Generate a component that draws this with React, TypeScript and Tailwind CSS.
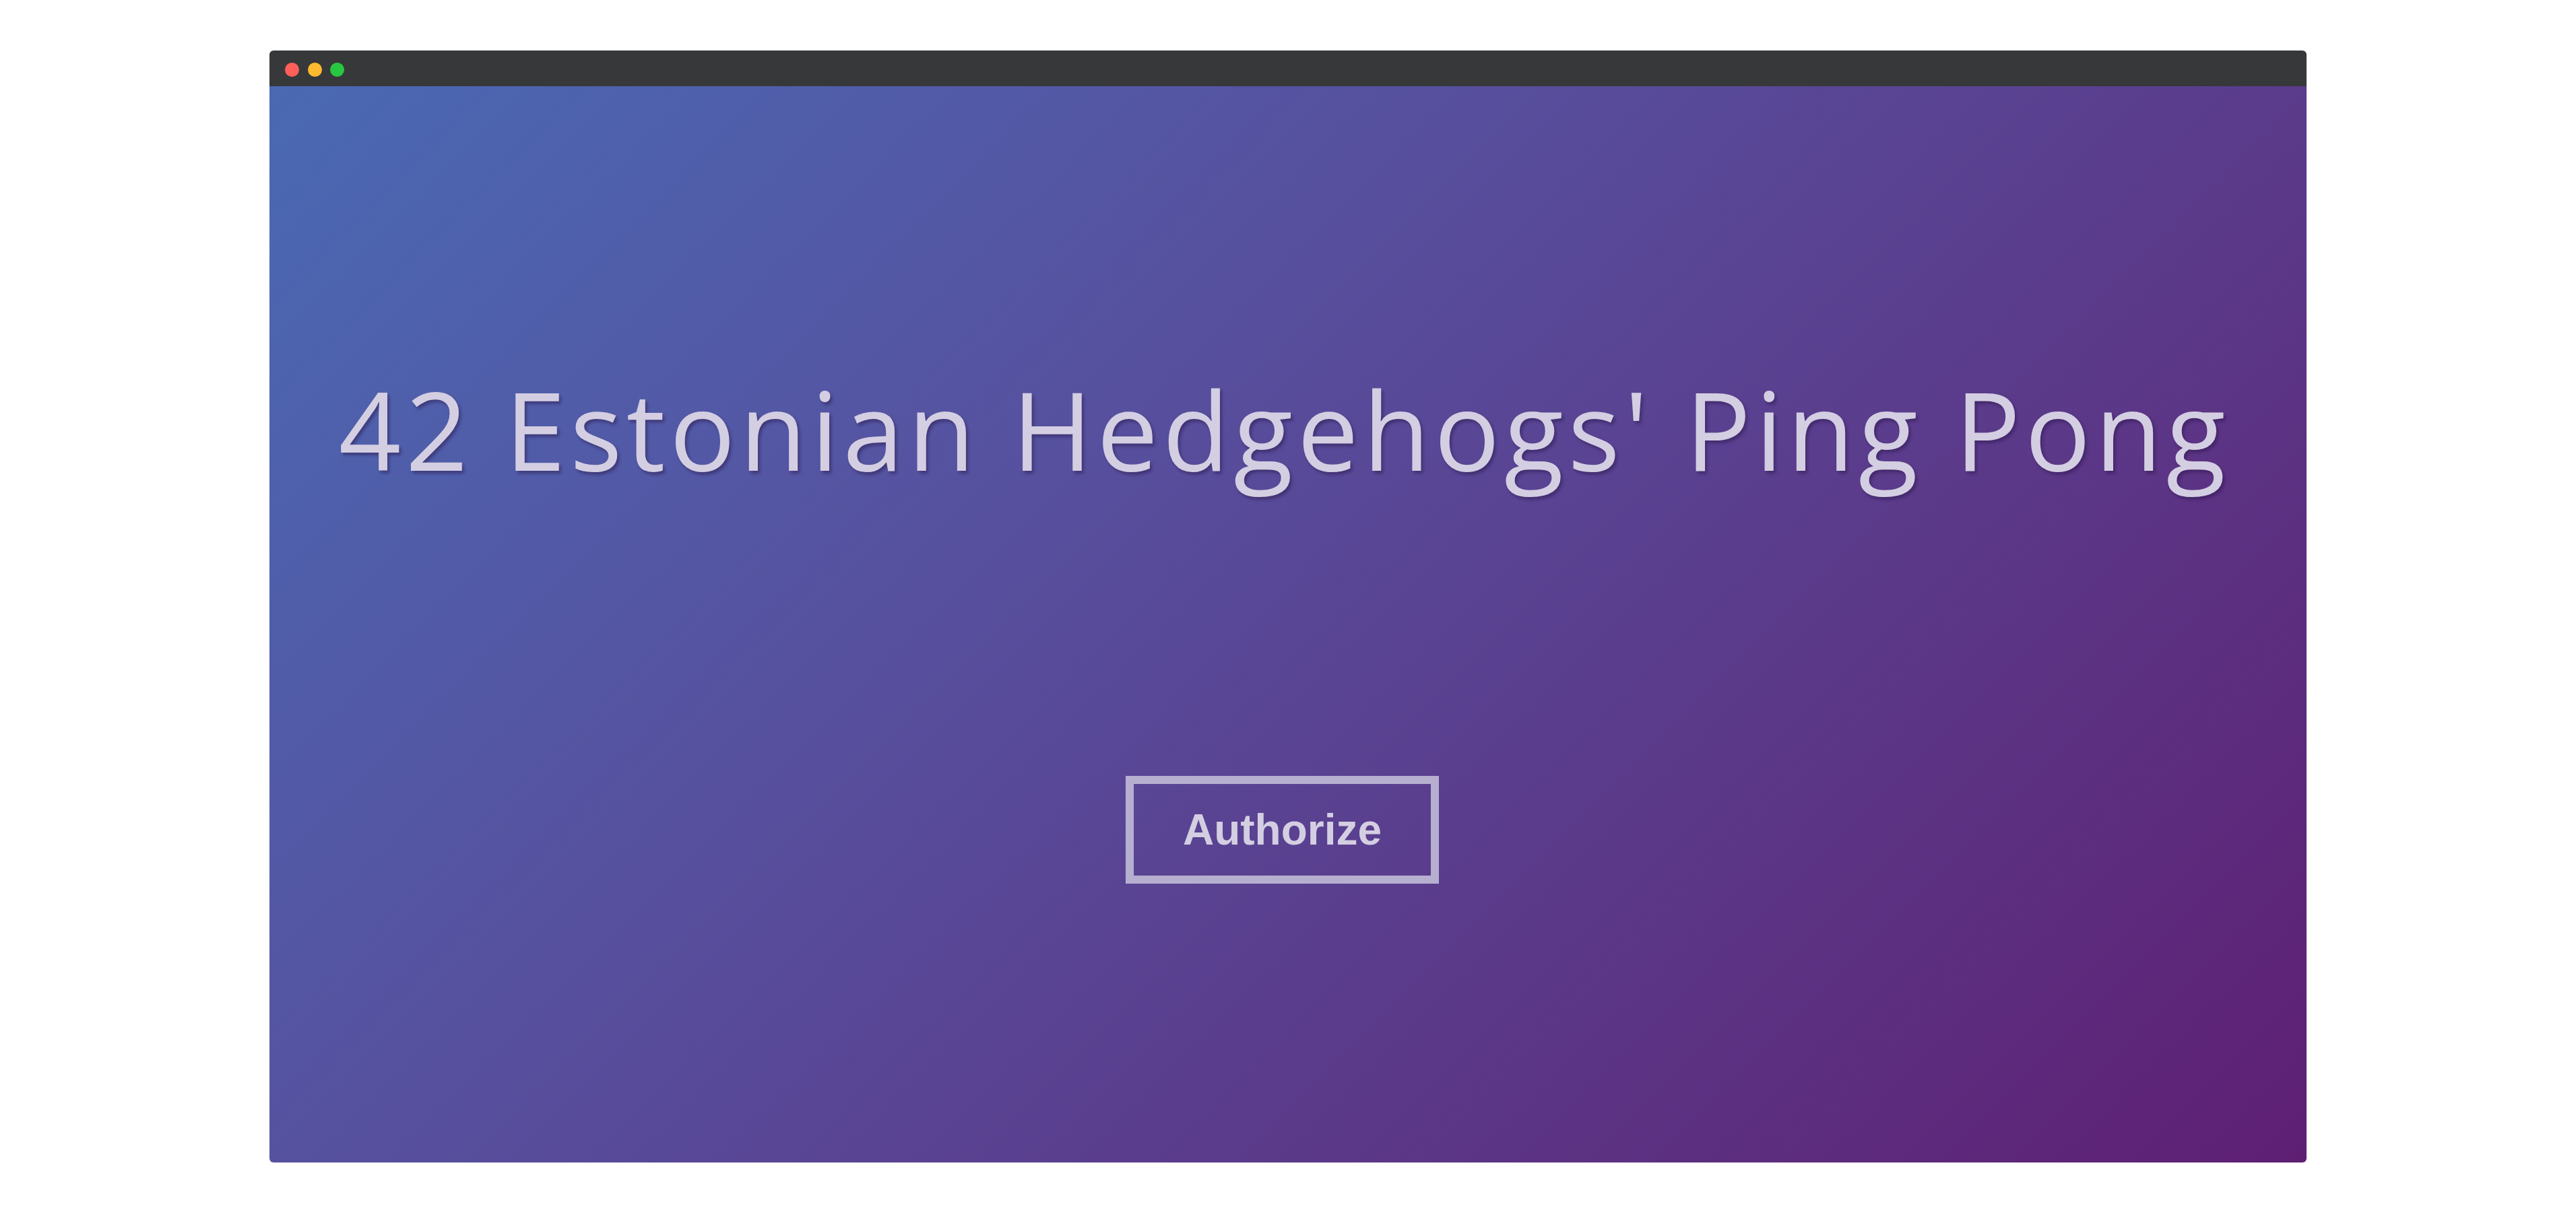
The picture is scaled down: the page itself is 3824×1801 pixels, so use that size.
import React from "react";

export default function App() {
  return (
    <div className="w-full h-[1801px] bg-white pt-[75px]">
      <div className="mx-auto w-[3024px] h-[1651px] rounded-md overflow-hidden flex flex-col">
        <div className="h-[53px] bg-[#37383a] flex items-start pt-[18px] pl-[23px] gap-[12.5px] shrink-0">
          <div className="w-[21px] h-[21px] rounded-full bg-[#fe5f58]" />
          <div className="w-[21px] h-[21px] rounded-full bg-[#febb2f]" />
          <div className="w-[21px] h-[21px] rounded-full bg-[#28c841]" />
        </div>
        <div className="flex-1 flex flex-col items-center pr-[17px] pt-[427px] bg-[linear-gradient(135deg,#4a69b3_0%,#5652a0_35%,#5b3b8b_65%,#5e1f73_100%)]">
          <h1
            className="pl-[6px] text-[162px] leading-none font-normal tracking-[6.5px] text-[#d4cee2] whitespace-nowrap [text-shadow:3px_4px_4px_rgba(40,20,70,0.45)]"
            style={{ fontFamily: '"Open Sans", "Noto Sans", sans-serif' }}
          >
            42 Estonian Hedgehogs' Ping Pong
          </h1>
          <button
            className="mt-[435px] w-[465px] h-[160px] border-[12px] border-[#b7afd0] flex items-center justify-center text-[64px] font-bold text-[#d4cee2] bg-transparent"
            style={{ fontFamily: '"Liberation Sans", Arial, sans-serif' }}
          >
            Authorize
          </button>
        </div>
      </div>
    </div>
  );
}
